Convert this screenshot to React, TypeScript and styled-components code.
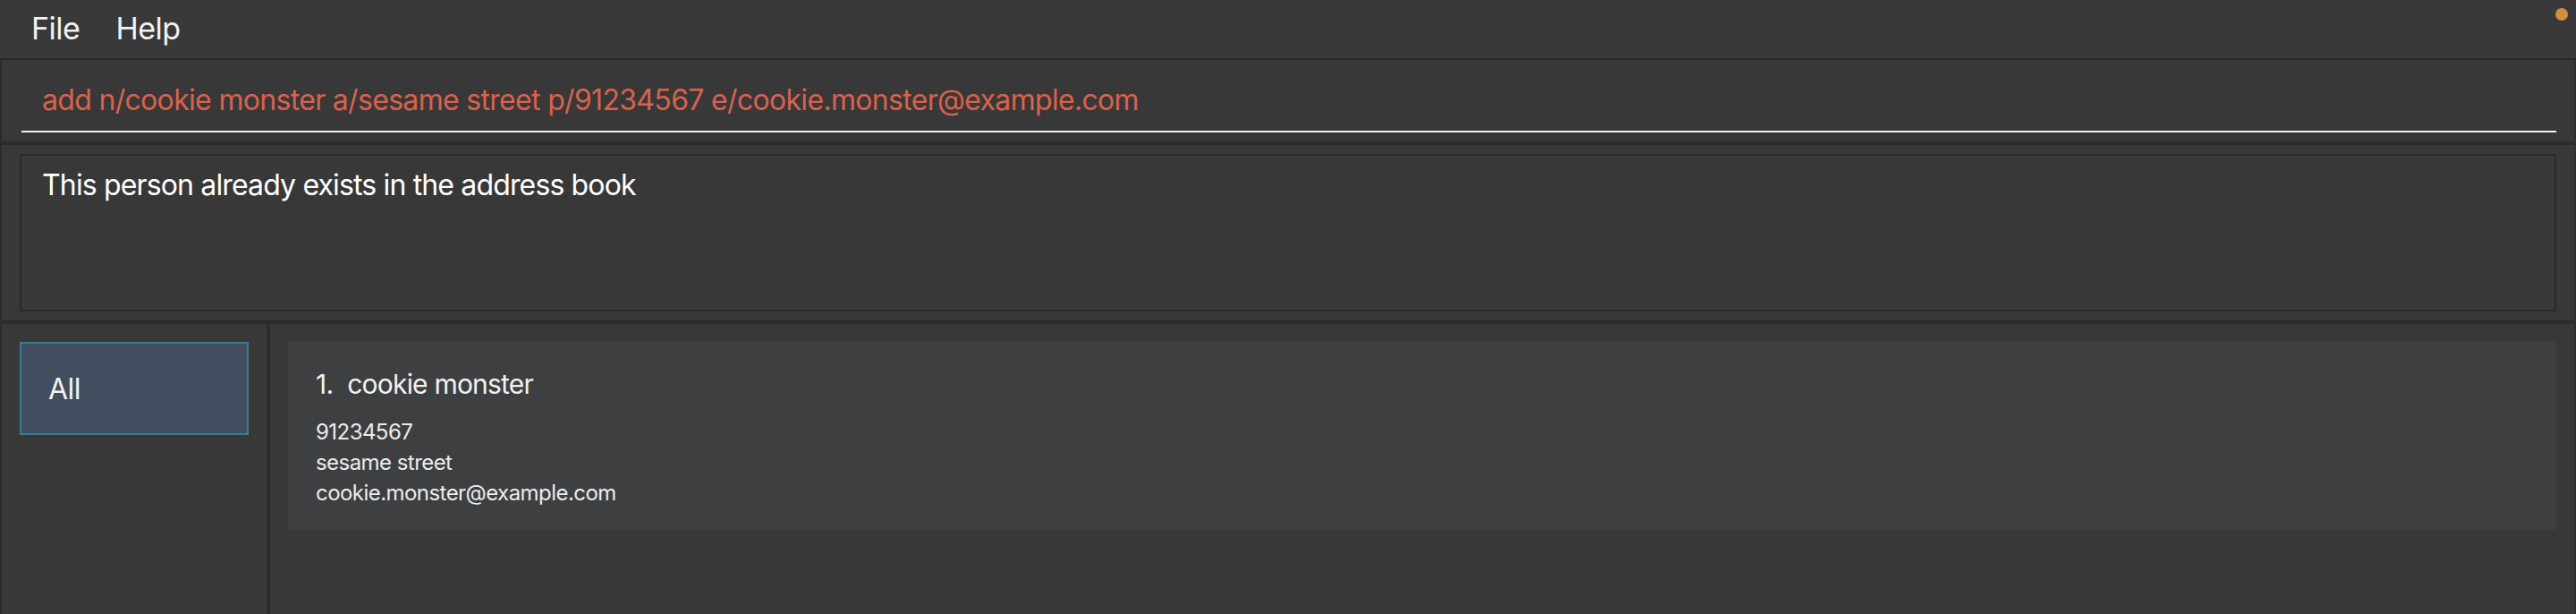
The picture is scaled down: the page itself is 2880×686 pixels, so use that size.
import React from "react";
import styled, { createGlobalStyle } from "styled-components";

const Global = createGlobalStyle`
  html, body { margin: 0; padding: 0; background: #383838; }
  body { font-family: Inter, "Noto Sans", sans-serif; }
  * { box-sizing: border-box; }
`;

const Window = styled.div`
  position: relative;
  width: 2880px;
  height: 686px;
  background: #383838;
  display: flex;
  flex-direction: column;
  overflow: hidden;
`;

const MenuBar = styled.div`
  height: 67px;
  flex: none;
  display: flex;
  align-items: center;
  gap: 40px;
  padding: 0 0 2px 35px;
  background: #393939;
  border-bottom: 2px solid #2b2b2b;
`;

const MenuItem = styled.span`
  font-size: 34px;
  color: #f2f2f2;
  letter-spacing: -0.5px;
`;

const StatusDot = styled.span`
  position: absolute;
  top: 9px;
  right: 9px;
  width: 14px;
  height: 14px;
  border-radius: 50%;
  background: #d28f3c;
`;

const Body = styled.div`
  flex: 1;
  display: flex;
  flex-direction: column;
  min-height: 0;
  border-left: 2px solid #2b2b2b;
  border-right: 2px solid #2f2f2f;
`;

const CommandPanel = styled.div`
  height: 95px;
  flex: none;
  display: flex;
  align-items: flex-end;
  padding: 0 20px 10px 22px;
  border-bottom: 4px solid #2b2b2b;
`;

const CommandInput = styled.div`
  flex: 1;
  line-height: 46px;
  padding: 0 0 11px 23px;
  border-bottom: 2px solid #f2f2f2;
  font-size: 32px;
  color: #d9624d;
  letter-spacing: -0.68px;
  white-space: nowrap;
`;

const ResultPanel = styled.div`
  height: 200px;
  flex: none;
  padding: 10px 20px 10px 20px;
  border-bottom: 4px solid #2b2b2b;
  display: flex;
`;

const ResultBox = styled.div`
  flex: 1;
  border: 2px solid #2b2b2b;
  padding: 13px 23px;
  font-size: 32px;
  line-height: 40px;
  color: #ffffff;
  letter-spacing: -0.85px;
`;

const Lower = styled.div`
  flex: 1;
  display: flex;
  min-height: 0;
`;

const Sidebar = styled.div`
  width: 300px;
  flex: none;
  padding: 20px;
  border-right: 4px solid #2b2b2b;
`;

const FilterButton = styled.div<{ $active?: boolean }>`
  height: 104px;
  display: flex;
  align-items: center;
  padding-left: 30px;
  border: 2px solid ${(p) => (p.$active ? "#3b7c8f" : "transparent")};
  background: ${(p) => (p.$active ? "#414e5f" : "transparent")};
  font-size: 32px;
  color: #f2f2f2;
  letter-spacing: -0.5px;
`;

const PersonList = styled.div`
  flex: 1;
  padding: 20px;
  display: flex;
  flex-direction: column;
  gap: 20px;
`;

const Card = styled.div`
  height: 210px;
  background: #3e3f41;
  padding: 25px 31px 0 31px;
  display: flex;
  flex-direction: column;
`;

const Name = styled.div`
  display: flex;
  font-size: 30px;
  line-height: 44px;
  color: #f2f2f2;
  letter-spacing: -0.8px;
  white-space: nowrap;
`;

const Index = styled.span`
  margin-right: 16px;
`;

const Detail = styled.div`
  font-size: 24px;
  line-height: 34px;
  color: #ececec;
  letter-spacing: -0.55px;
`;

const Details = styled.div`
  margin-top: 15px;
  display: flex;
  flex-direction: column;
`;

type Person = { name: string; phone: string; address: string; email: string };

const people: Person[] = [
  {
    name: "cookie monster",
    phone: "91234567",
    address: "sesame street",
    email: "cookie.monster@example.com",
  },
];

export default function App() {
  return (
    <>
      <Global />
      <Window>
        <MenuBar>
          <MenuItem>File</MenuItem>
          <MenuItem>Help</MenuItem>
        </MenuBar>
        <StatusDot />
        <Body>
          <CommandPanel>
            <CommandInput>
              add n/cookie monster a/sesame street p/91234567 e/cookie.monster@example.com
            </CommandInput>
          </CommandPanel>
          <ResultPanel>
            <ResultBox>This person already exists in the address book</ResultBox>
          </ResultPanel>
          <Lower>
            <Sidebar>
              <FilterButton $active>All</FilterButton>
            </Sidebar>
            <PersonList>
              {people.map((p, i) => (
                <Card key={p.email}>
                  <Name>
                    <Index>{`${i + 1}.`}</Index>
                    <span>{p.name}</span>
                  </Name>
                  <Details>
                    <Detail>{p.phone}</Detail>
                    <Detail>{p.address}</Detail>
                    <Detail>{p.email}</Detail>
                  </Details>
                </Card>
              ))}
            </PersonList>
          </Lower>
        </Body>
      </Window>
    </>
  );
}
